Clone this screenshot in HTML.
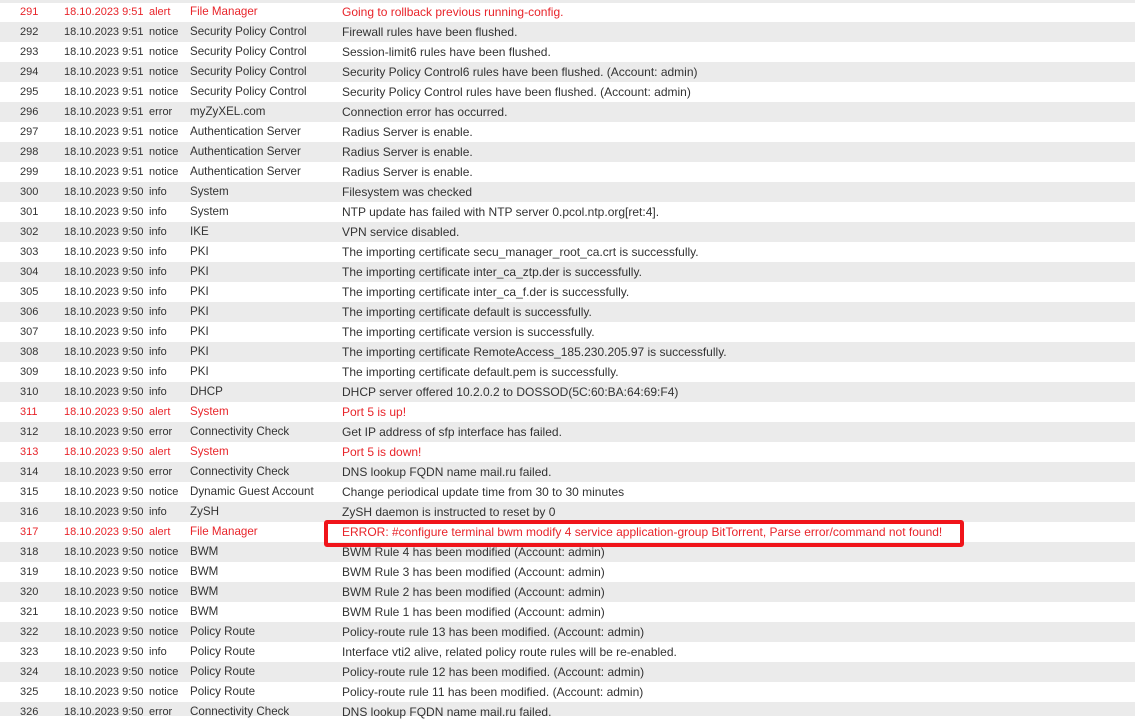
<!DOCTYPE html>
<html><head><meta charset="utf-8"><style>
html,body{margin:0;padding:0;background:#fff;width:1135px;height:719px;overflow:hidden}
body{font-family:"Liberation Sans",sans-serif;font-size:11px;color:#333;position:relative}
.top{position:absolute;left:0;top:0;width:1135px;height:3px;background:#ebebeb}
.r{position:absolute;left:0;width:1135px;height:20px;line-height:20px;white-space:nowrap}
.r.g{background:#ebebeb}
.r span{position:absolute;top:0}
.a{left:20px}.b{left:64px}.c{left:149px}.d{left:190px;font-size:11.6px}.e{left:342px;font-size:12px}
.red{color:#e8242a}
.box{position:absolute;left:324px;top:520px;width:640px;height:27px;box-sizing:border-box;border:4px solid #f0141a;border-radius:3px}
</style></head><body>
<div class="top"></div>
<div id="rows"></div>
<script>
var d=[
[291,"9:51","alert","File Manager","Going to rollback previous running-config.",1],
[292,"9:51","notice","Security Policy Control","Firewall rules have been flushed."],
[293,"9:51","notice","Security Policy Control","Session-limit6 rules have been flushed."],
[294,"9:51","notice","Security Policy Control","Security Policy Control6 rules have been flushed. (Account: admin)"],
[295,"9:51","notice","Security Policy Control","Security Policy Control rules have been flushed. (Account: admin)"],
[296,"9:51","error","myZyXEL.com","Connection error has occurred."],
[297,"9:51","notice","Authentication Server","Radius Server is enable."],
[298,"9:51","notice","Authentication Server","Radius Server is enable."],
[299,"9:51","notice","Authentication Server","Radius Server is enable."],
[300,"9:50","info","System","Filesystem was checked"],
[301,"9:50","info","System","NTP update has failed with NTP server 0.pcol.ntp.org[ret:4]."],
[302,"9:50","info","IKE","VPN service disabled."],
[303,"9:50","info","PKI","The importing certificate secu_manager_root_ca.crt is successfully."],
[304,"9:50","info","PKI","The importing certificate inter_ca_ztp.der is successfully."],
[305,"9:50","info","PKI","The importing certificate inter_ca_f.der is successfully."],
[306,"9:50","info","PKI","The importing certificate default is successfully."],
[307,"9:50","info","PKI","The importing certificate version is successfully."],
[308,"9:50","info","PKI","The importing certificate RemoteAccess_185.230.205.97 is successfully."],
[309,"9:50","info","PKI","The importing certificate default.pem is successfully."],
[310,"9:50","info","DHCP","DHCP server offered 10.2.0.2 to DOSSOD(5C:60:BA:64:69:F4)"],
[311,"9:50","alert","System","Port 5 is up!",1],
[312,"9:50","error","Connectivity Check","Get IP address of sfp interface has failed."],
[313,"9:50","alert","System","Port 5 is down!",1],
[314,"9:50","error","Connectivity Check","DNS lookup FQDN name mail.ru failed."],
[315,"9:50","notice","Dynamic Guest Account","Change periodical update time from 30 to 30 minutes"],
[316,"9:50","info","ZySH","ZySH daemon is instructed to reset by 0"],
[317,"9:50","alert","File Manager","ERROR: #configure terminal bwm modify 4 service application-group BitTorrent, Parse error/command not found!",1],
[318,"9:50","notice","BWM","BWM Rule 4 has been modified (Account: admin)"],
[319,"9:50","notice","BWM","BWM Rule 3 has been modified (Account: admin)"],
[320,"9:50","notice","BWM","BWM Rule 2 has been modified (Account: admin)"],
[321,"9:50","notice","BWM","BWM Rule 1 has been modified (Account: admin)"],
[322,"9:50","notice","Policy Route","Policy-route rule 13 has been modified. (Account: admin)"],
[323,"9:50","info","Policy Route","Interface vti2 alive, related policy route rules will be re-enabled."],
[324,"9:50","notice","Policy Route","Policy-route rule 12 has been modified. (Account: admin)"],
[325,"9:50","notice","Policy Route","Policy-route rule 11 has been modified. (Account: admin)"],
[326,"9:50","error","Connectivity Check","DNS lookup FQDN name mail.ru failed."]];
var h="";
d.forEach(function(r,i){
var cls="r"+(r[0]%2==0?" g":"")+(r[5]?" red":"");
var top=2+i*20;
h+='<div class="'+cls+'" style="top:'+top+'px'+(r[0]==326?';height:14px':'')+'"><span class="a">'+r[0]+'</span><span class="b">18.10.2023 '+r[1]+'</span><span class="c">'+r[2]+'</span><span class="d">'+r[3]+'</span><span class="e">'+r[4]+'</span></div>';
});
document.getElementById("rows").innerHTML=h;
</script>
<div class="box"></div>
</body></html>
